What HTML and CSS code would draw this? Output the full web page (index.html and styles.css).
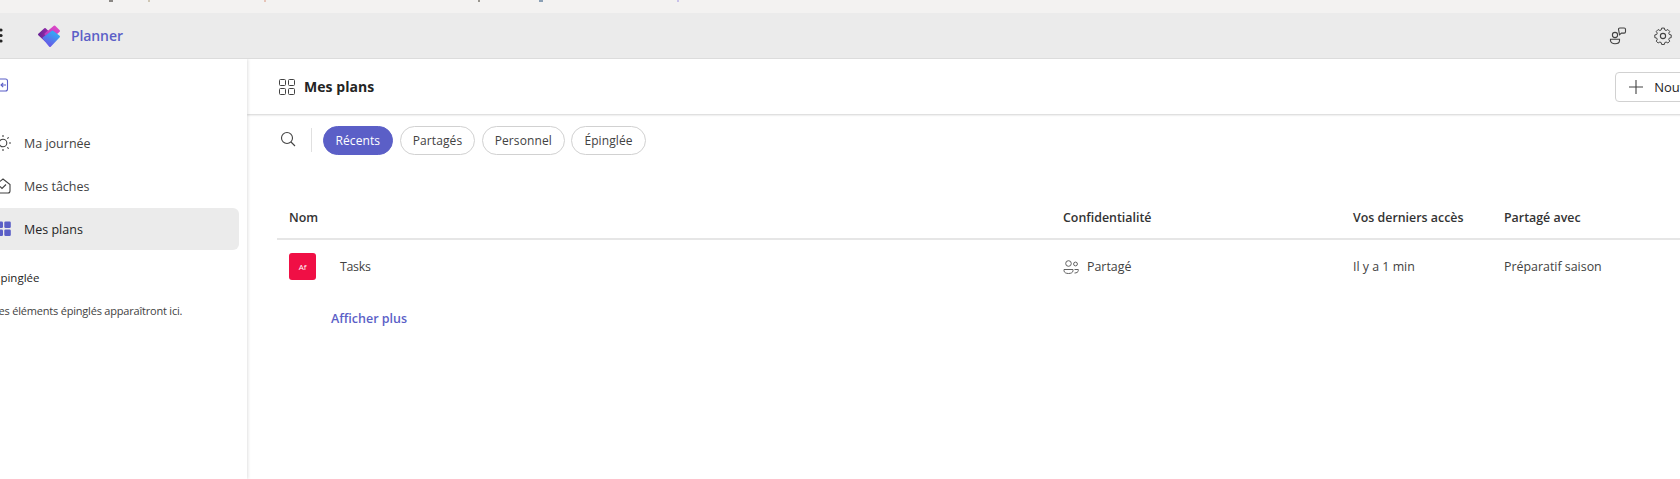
FILE: index.html
```html
<!DOCTYPE html>
<html lang="fr">
<head>
<meta charset="utf-8">
<title>Planner</title>
<link rel="stylesheet" href="styles.css">
</head>
<body>
<div class="app">
  <div class="notice">
    <i class="mark m1"></i><i class="mark m2"></i><i class="mark m3"></i><i class="mark m4"></i><i class="mark m5"></i><i class="mark m6"></i>
  </div>
  <header class="topbar">
    <svg class="waffle" viewBox="0 0 15 15" width="15" height="15"><g fill="#242424"><circle cx="2" cy="2" r="1.600"/><circle cx="7.500" cy="2" r="1.600"/><circle cx="13" cy="2" r="1.600"/><circle cx="2" cy="7.500" r="1.600"/><circle cx="7.500" cy="7.500" r="1.600"/><circle cx="13" cy="7.500" r="1.600"/><circle cx="2" cy="13" r="1.600"/><circle cx="7.500" cy="13" r="1.600"/><circle cx="13" cy="13" r="1.600"/></g></svg>
    <svg class="logo" viewBox="0 0 24 24" width="24" height="24">
      <defs>
        <linearGradient id="lgp" x1="0" y1="0.500" x2="1" y2="0.500"><stop offset="0" stop-color="#6a2396"/><stop offset="1" stop-color="#a92fb4"/></linearGradient>
        <linearGradient id="lgm" x1="0" y1="1" x2="1" y2="0"><stop offset="0" stop-color="#b735c4"/><stop offset="1" stop-color="#e04cc6"/></linearGradient>
        <linearGradient id="lgb" x1="0.800" y1="0.100" x2="0.300" y2="1"><stop offset="0" stop-color="#35a8f5"/><stop offset="1" stop-color="#6a55e6"/></linearGradient>
      </defs>
      <path d="M2 10.500 L8 5 L15 12 L9 17 Z" fill="url(#lgp)" stroke="url(#lgp)" stroke-width="2" stroke-linejoin="round"/>
      <path d="M8.500 10 L17.500 2.500 L22 7 L13 15 Z" fill="url(#lgm)" stroke="url(#lgm)" stroke-width="2" stroke-linejoin="round"/>
      <path d="M6.500 14 L15.500 7.500 L22 12.500 L13 22 Z" fill="url(#lgb)" stroke="url(#lgb)" stroke-width="2" stroke-linejoin="round"/>
    </svg>
    <span class="brand">Planner</span>
    <div class="top-actions">
      <svg viewBox="0 0 20 20" width="20" height="20" fill="none" stroke="#424242" stroke-width="1.100"><circle cx="7" cy="9" r="2.600"/><path d="M2.500 13.200h9v1.300c0 2-2 3.300-4.500 3.300s-4.500-1.300-4.500-3.300z"/><path d="M10.500 3.300a1.300 1.300 0 0 1 1.300-1.300h4.400a1.300 1.300 0 0 1 1.300 1.300v2.500a1.300 1.300 0 0 1-1.300 1.300h-2.700l-2 1.600z"/></svg>
      <svg viewBox="0 0 20 20" width="20" height="20" fill="none" stroke="#424242" stroke-width="1.100" stroke-linejoin="round"><circle cx="10" cy="10" r="2.600"/><path d="M8.500 2.200h3l.5 2.100 1.500.6 1.900-1.100 2.100 2.100-1.100 1.900.6 1.500 2.100.5v3l-2.100.5-.6 1.500 1.100 1.900-2.100 2.100-1.900-1.100-1.500.6-.5 2.100h-3l-.5-2.100-1.500-.6-1.900 1.100-2.100-2.100 1.100-1.900-.6-1.500-2.100-.5v-3l2.100-.5.6-1.500-1.100-1.900 2.100-2.100 1.900 1.100 1.500-.6z" transform="translate(1 1) scale(.9) translate(0 -1)"/></svg>
    </div>
  </header>
  <div class="body-row">
    <aside class="sidebar">
      <svg class="collapse" viewBox="0 0 16 16" width="16" height="16" fill="none" stroke="#5b5fc7" stroke-width="1.100"><rect x="1.500" y="2" width="13" height="12" rx="2"/><path d="M13 8H8M10.200 5.800 8 8l2.200 2.200"/></svg>
      <nav class="nav">
        <a class="nav-item">
          <svg viewBox="0 0 20 20" width="20" height="20" fill="none" stroke="#424242" stroke-width="1.100"><circle cx="10" cy="10" r="3.800"/><path d="M10 2v2M10 16v2M2 10h2M16 10h2M4.300 4.300l1.400 1.400M14.300 14.300l1.400 1.400M4.300 15.700l1.400-1.400M14.300 5.700l1.400-1.400"/></svg>
          <span>Ma journée</span>
        </a>
        <a class="nav-item">
          <svg viewBox="0 0 20 20" width="20" height="20" fill="none" stroke="#424242" stroke-width="1.100"><path d="M3 8.500 10 3l7 5.500V15a2 2 0 0 1-2 2H5a2 2 0 0 1-2-2z"/><path d="m7 10.500 2 2 4-4"/></svg>
          <span>Mes tâches</span>
        </a>
        <a class="nav-item active">
          <svg viewBox="0 0 20 20" width="20" height="20" fill="#5b5fc7"><rect x="3.500" y="2.500" width="6.500" height="6.500" rx="1.200"/><rect x="11.300" y="2.500" width="6.500" height="6.500" rx="1.200"/><rect x="3.500" y="10.500" width="6.500" height="6.500" rx="1.200"/><rect x="11.300" y="10.500" width="6.500" height="6.500" rx="1.200"/></svg>
          <span>Mes plans</span>
        </a>
      </nav>
      <h2 class="side-title">Épinglée</h2>
      <p class="side-note">Les éléments épinglés apparaîtront ici.</p>
    </aside>
    <main class="main">
      <div class="title-bar">
        <svg class="title-icon" viewBox="0 0 16 16" width="16" height="16" fill="none" stroke="#424242" stroke-width="1"><rect x="0.500" y="0.500" width="6" height="6" rx="1"/><rect x="9.500" y="0.500" width="6" height="6" rx="1"/><rect x="0.500" y="9.500" width="6" height="6" rx="1"/><rect x="9.500" y="9.500" width="6" height="6" rx="1"/></svg>
        <h1>Mes plans</h1>
        <button class="new-btn"><svg viewBox="0 0 16 16" width="16" height="16" fill="none" stroke="#424242" stroke-width="1.100"><path d="M8 1v14M1 8h14"/></svg><span>Nouveau plan</span></button>
      </div>
      <div class="filters">
        <svg class="search" viewBox="0 0 16 16" width="16" height="16" fill="none" stroke="#424242" stroke-width="1.100"><circle cx="7" cy="7" r="5.500"/><path d="m11 11 4 4"/></svg>
        <span class="divider"></span>
        <button class="pill on">Récents</button>
        <button class="pill">Partagés</button>
        <button class="pill">Personnel</button>
        <button class="pill">Épinglée</button>
      </div>
      <div class="table">
        <div class="row head">
          <div>Nom</div>
          <div>Confidentialité</div>
          <div>Vos derniers accès</div>
          <div>Partagé avec</div>
        </div>
        <div class="row item">
          <div class="name"><span class="avatar">Af</span><span class="plan-name">Tasks</span></div>
          <div class="priv"><svg viewBox="0 0 16 16" width="16" height="16" fill="none" stroke="#616161" stroke-width="1"><circle cx="5.500" cy="4.500" r="2.800"/><circle cx="12.500" cy="5" r="1.900"/><path d="M1 10.500h9v1.200c0 1.800-2 2.800-4.500 2.800S1 13.500 1 11.700zM11.500 14c2 0 3.800-.8 3.800-2.500v-1h-3.800"/></svg><span>Partagé</span></div>
          <div>Il y a 1 min</div>
          <div>Préparatif saison</div>
        </div>
        <a class="more">Afficher plus</a>
      </div>
    </main>
  </div>
</div>
</body>
</html>
```
FILE: styles.css
```css
* { box-sizing: border-box; }
html, body { margin: 0; height: 100%; overflow: hidden; background: #fff; }
body { font-family: "Open Sans", "Noto Sans", "Liberation Sans", sans-serif; color: #242424; font-size: 12.500px; }
.app { width: 1860px; margin-left: -12px; height: 479px; display: flex; flex-direction: column; }

.notice { height: 13px; flex: none; background: #f3f2f1; display: flex; align-items: flex-start; }
.mark { display: block; height: 2px; width: 2px; flex: none; background: #c9c4bc; }
.m1 { margin-left: 121px; width: 4px; background: #8a8784; }
.m2 { margin-left: 35px; background: #cfc7b5; }
.m3 { margin-left: 114px; background: #e6c4b8; }
.m4 { margin-left: 212px; background: #99968f; }
.m5 { margin-left: 59px; width: 4px; background: #8ba0b5; }
.m6 { margin-left: 134px; background: #c9c2ea; }

.topbar { height: 46px; flex: none; background: #ebebeb; border-bottom: 1px solid #dcdcdc; display: flex; align-items: center; position: relative; z-index: 3; }
.waffle { flex: none; }
.logo { margin-left: 34px; flex: none; }
.brand { margin-left: 10px; font-size: 14px; font-weight: 600; color: #5b5fc7; letter-spacing: -0.1px; }
.top-actions { margin-left: 1485px; display: flex; gap: 25px; align-items: center; }

.body-row { flex: 1; display: flex; min-height: 0; }
.sidebar { width: 259px; flex: none; background: #fff; padding: 18px 8px 0 0; box-shadow: 1px 0 3px rgba(0,0,0,.12); position: relative; z-index: 2; }
.collapse { display: block; margin-left: 5px; }
.nav { margin-top: 29px; display: flex; flex-direction: column; gap: 1px; }
.nav-item { height: 42px; display: flex; align-items: center; gap: 11px; font-size: 12.500px; color: #424242; border-radius: 0 6px 6px 0; }
.nav-item svg { flex: none; margin-left: 5px; }
.nav-item.active { background: #ebebeb; color: #242424; }
.side-title { font-size: 11.500px; font-weight: 400; margin: 20px 0 0 6px; line-height: 16px; }
.side-note { font-size: 11px; letter-spacing: -0.2px; color: #424242; margin: 17px 0 0 5px; line-height: 16px; }

.main { flex: 1; min-width: 0; display: flex; flex-direction: column; }
.title-bar { height: 55px; flex: none; display: flex; align-items: center; padding: 1px 0 0 32px; box-shadow: 0 1px 2px rgba(0,0,0,.18); }
.title-icon { flex: none; }
h1 { margin: 0 0 0 9px; font-size: 14px; font-weight: 700; line-height: 20px; letter-spacing: 0.05px; }
.new-btn { margin-left: 1241px; height: 30px; width: 200px; flex: none; display: flex; align-items: center; gap: 10px; padding: 0 0 0 12px; background: #fff; border: 1px solid #d1d1d1; border-radius: 4px; font: inherit; font-size: 13px; color: #242424; }

.filters { display: flex; align-items: center; gap: 6.500px; height: 30px; margin: 11px 0 0 33px; }
.search { flex: none; margin-top: -3px; }
.divider { width: 1px; height: 24px; background: #e0e0e0; margin: 0 4.500px 0 8px; }
.pill { height: 29px; padding: 0 12px; border: 1px solid #d1d1d1; border-radius: 15px; background: #fff; font: inherit; font-size: 12px; letter-spacing: 0.1px; color: #424242; }
.pill.on { background: #5b5fc7; border-color: #5b5fc7; color: #fff; }

.table { margin: 42px 0 0 30px; }
.row { display: grid; grid-template-columns: 774px 290px 151px 1fr; align-items: center; padding-left: 12px; }
.head { height: 43px; border-bottom: 2px solid #e6e6e6; font-weight: 600; font-size: 12.400px; color: #333; }
.item { height: 53px; font-size: 12.400px; color: #424242; }
.name { display: flex; align-items: center; gap: 24px; }
.plan-name { letter-spacing: -0.3px; }
.avatar { width: 27px; height: 27px; border-radius: 3px; background: #f00f45; color: #fff; font-size: 8px; display: flex; align-items: center; justify-content: center; }
.priv { display: flex; align-items: center; gap: 8px; }
.more { display: block; margin: 17px 0 0 54px; font-size: 12.500px; font-weight: 600; color: #5b5fc7; line-height: 18px; }
```
